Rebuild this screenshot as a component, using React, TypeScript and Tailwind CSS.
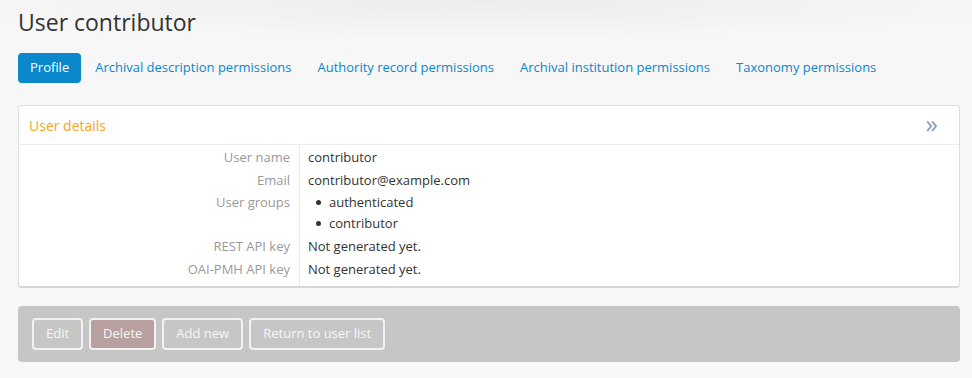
import React from "react";

function App() {
  const tabs = [
    "Archival description permissions",
    "Authority record permissions",
    "Archival institution permissions",
    "Taxonomy permissions",
  ];

  const font = { fontFamily: '"Open Sans", "Noto Sans", sans-serif' };

  return (
    <div
      className="w-[972px] h-[378px] overflow-hidden bg-[#f7f7f7] bg-[radial-gradient(ellipse_60%_40px_at_50%_0%,#ececec,#f7f7f7)] text-[#333]"
      style={font}
    >
      <div className="pl-[18px] pr-3 pt-[6px]">
        <h1 className="text-[23px] leading-[32px] text-[#333]">User contributor</h1>

        <div className="mt-[15px] flex items-center gap-[2px] text-[13px]">
          <span className="h-[30px] px-3 flex items-center rounded bg-[#0a88cc] text-white">Profile</span>
          {tabs.map((t) => (
            <span key={t} className="h-[30px] px-3 flex items-center text-[#0a87c9]">
              {t}
            </span>
          ))}
        </div>

        <div className="mt-[22px] w-[942px] bg-white border border-[#dedede] border-b-2 border-b-[#d6d6d6] rounded">
          <div className="h-[39px] px-[10px] flex items-center justify-between border-b border-[#ececec]">
            <span className="text-[14px] text-[#f5a623]">User details</span>
            <span className="text-[25px] leading-none text-[#8d9db0] pr-[11px] pb-[3px]">»</span>
          </div>
          <div className="grid grid-cols-[281px_1fr] text-[13px] leading-[22.5px]">
            <div className="border-r border-[#ececec] pr-[9px] pt-[1px] pb-[6px] text-right text-[#999]">
              <div>User name</div>
              <div>Email</div>
              <div className="h-[44px]">User groups</div>
              <div>REST API key</div>
              <div>OAI-PMH API key</div>
            </div>
            <div className="pl-[8px] pt-[1px] pb-[6px]">
              <div>contributor</div>
              <div>contributor@example.com</div>
              <ul className="h-[44px] leading-[21px] pt-[1px]">
                <li className="flex items-center">
                  <span className="ml-[8px] mr-[8px] w-[5px] h-[5px] rounded-full bg-[#333]" />
                  authenticated
                </li>
                <li className="flex items-center">
                  <span className="ml-[8px] mr-[8px] w-[5px] h-[5px] rounded-full bg-[#333]" />
                  contributor
                </li>
              </ul>
              <div>Not generated yet.</div>
              <div>Not generated yet.</div>
            </div>
          </div>
        </div>

        <div className="mt-[18px] w-[942px] h-[56px] bg-[#c6c6c6] rounded flex items-center gap-[6px] px-[14px] text-[13px]">
          <span className="h-[32px] px-[12px] flex items-center border-2 border-[#f2f2f2] rounded text-[#f7f7f7]">Edit</span>
          <span className="h-[32px] px-[12px] flex items-center border-2 border-[#f2f2f2] rounded bg-[#b9a0a0] text-[#f7f7f7]">Delete</span>
          <span className="h-[32px] px-[12px] flex items-center border-2 border-[#f2f2f2] rounded text-[#f7f7f7]">Add new</span>
          <span className="h-[32px] px-[12px] flex items-center border-2 border-[#f2f2f2] rounded text-[#f7f7f7]">Return to user list</span>
        </div>
      </div>
    </div>
  );
}

export default App;
